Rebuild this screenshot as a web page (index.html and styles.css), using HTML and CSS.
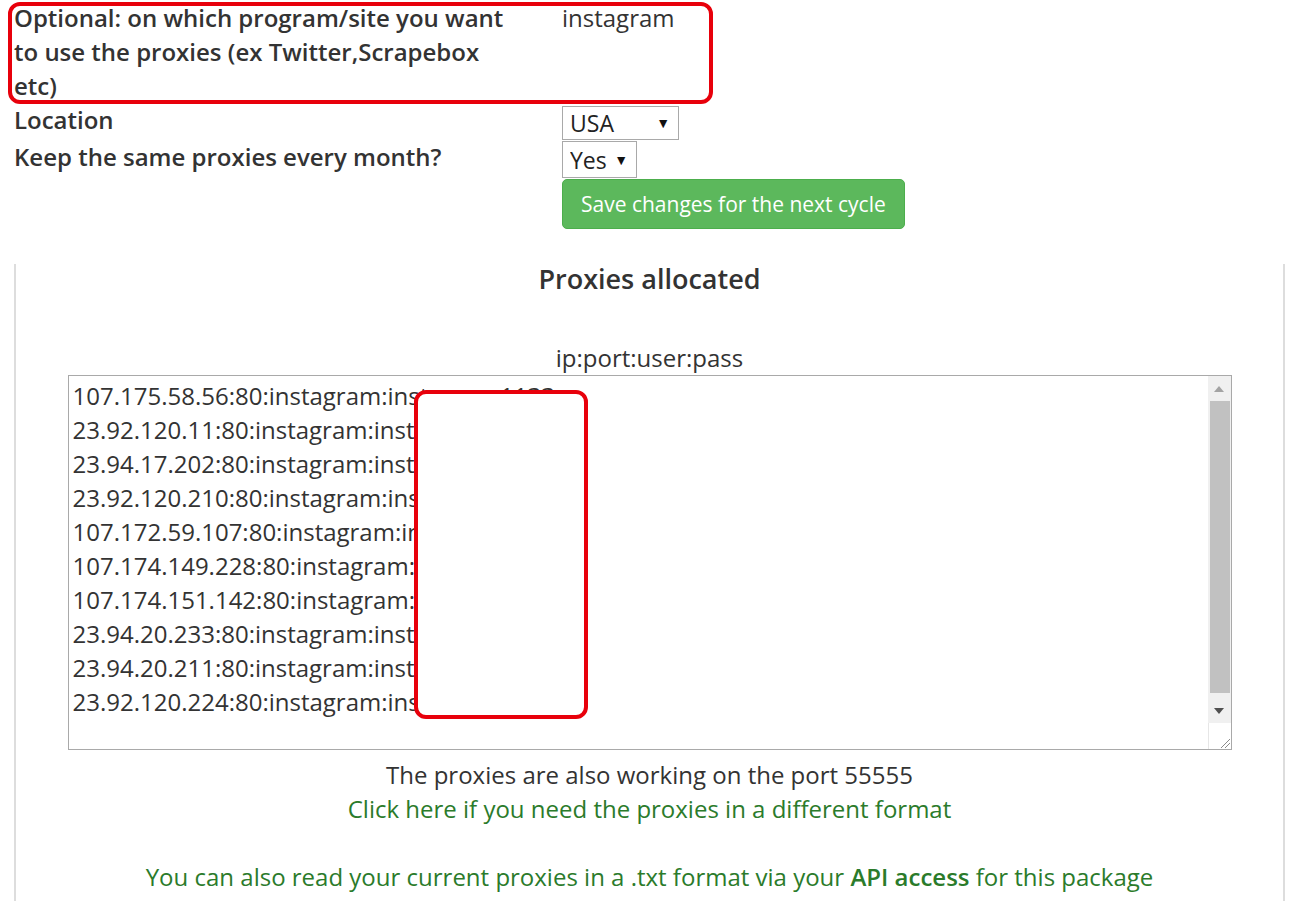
FILE: index.html
```html
<!DOCTYPE html>
<html lang="en">
  <head>
    <meta charset="UTF-8">
    <meta name="viewport" content="width=device-width, initial-scale=1.0">
    <title>Proxy package settings</title>
    <link rel="stylesheet" href="styles.css">
  </head>
  <body>
    <div class="page">
      <div class="settings">
        <div class="label">Optional: on which program/site you want to use the proxies (ex Twitter,Scrapebox etc)</div>
        <div class="value">instagram</div>

        <div class="label">Location</div>
        <div class="value">
          <span class="select select-location">
            <select>
              <option>USA</option>
              <option>UK</option>
              <option>Germany</option>
            </select>
          </span>
        </div>

        <div class="label label-keep">Keep the same proxies every month?</div>
        <div class="value">
          <span class="select select-keep">
            <select>
              <option>Yes</option>
              <option>No</option>
            </select>
          </span>
        </div>

        <div class="label"></div>
        <div class="value">
          <button class="btn-save">Save changes for the next cycle</button>
        </div>
      </div>

      <!-- annotation box drawn over the first row -->
      <div class="mark mark-row"></div>

      <div class="panel">
        <h4>Proxies allocated</h4>
        <div class="format">ip:port:user:pass</div>

        <div class="proxy-box">
          <textarea id="proxyList" readonly>107.175.58.56:80:instagram:instagram1133
23.92.120.11:80:instagram:instagram1133
23.94.17.202:80:instagram:instagram1133
23.92.120.210:80:instagram:instagram1133
107.172.59.107:80:instagram:instagram1133
107.174.149.228:80:instagram:instagram1133
107.174.151.142:80:instagram:instagram1133
23.94.20.233:80:instagram:instagram1133
23.94.20.211:80:instagram:instagram1133
23.92.120.224:80:instagram:instagram1133</textarea>

          <div class="scrollbar">
            <div class="sb-btn">
              <svg width="10" height="6" viewBox="0 0 10 6"><path d="M0 6 L5 0 L10 6 Z" fill="#a3a3a3"/></svg>
            </div>
            <div class="sb-track"><div class="sb-thumb"></div></div>
            <div class="sb-btn">
              <svg width="10" height="6" viewBox="0 0 10 6"><path d="M0 0 L10 0 L5 6 Z" fill="#505050"/></svg>
            </div>
            <div class="sb-corner">
              <svg width="12" height="12" viewBox="0 0 12 12">
                <path d="M2 11 L11 2 M6 11 L11 6" stroke="#8a8a8a" stroke-width="1"/>
              </svg>
            </div>
          </div>

          <!-- annotation box hiding the passwords -->
          <div class="mark mark-pass"></div>
        </div>

        <p class="port-note">The proxies are also working on the port 55555</p>
        <a class="link" href="#">Click here if you need the proxies in a different format</a>
        <p class="api-note">You can also read your current proxies in a .txt format via your <a href="#">API access</a> for this package</p>
      </div>
    </div>
  </body>
</html>
```

FILE: styles.css
```css
body {
    margin: 0;
    font-family: "Open Sans", "Liberation Sans", Arial, sans-serif;
    font-size: 24px;
    line-height: 34px;
    color: #333;
    background: #fff;
}
.page {
    position: relative;
    width: 1271px;
    margin-left: 14px;
    padding-top: 1px;
}
.settings {
    display: grid;
    grid-template-columns: 548px auto;
    align-items: start;
}
.label {
    font-weight: 600;
    padding-right: 40px;
}
.select {
    position: relative;
    display: inline-block;
}
.select select {
    -webkit-appearance: none;
    appearance: none;
    display: block;
    font-family: inherit;
    font-size: 23px;
    color: #222;
    background: #fff;
    border: 1px solid #a9a9a9;
    border-radius: 0;
    padding: 0 0 0 7px;
    margin: 0;
}
.select::after {
    content: "\25BC";
    position: absolute;
    top: 50%;
    transform: translateY(-50%);
    font-size: 14px;
    line-height: 14px;
    color: #111;
    pointer-events: none;
}
.select-location {
    margin-top: 3px;
}
.select-location select {
    width: 117px;
    height: 34px;
}
.select-location::after {
    right: 9px;
}
.select-keep {
    margin-top: 1px;
}
.select-keep select {
    width: 75px;
    height: 37px;
}
.select-keep::after {
    right: 9px;
}
.btn-save {
    margin-top: 1px;
    height: 50px;
    padding: 0 18px;
    font-family: inherit;
    font-size: 21px;
    color: #fff;
    background-color: #5cb85c;
    border: 1px solid #4cae4c;
    border-radius: 5px;
    cursor: pointer;
}
.mark {
    position: absolute;
    border: 4px solid #e8000b;
    border-radius: 12px;
    box-sizing: border-box;
}
.mark-row {
    left: -6px;
    top: 2px;
    width: 705px;
    height: 102px;
}
.panel {
    margin-top: 35px;
    border-left: 2px solid #ddd;
    border-right: 2px solid #ddd;
    text-align: center;
    padding-bottom: 20px;
}
.panel h4 {
    margin: 0;
    font-size: 27px;
    font-weight: 600;
    line-height: 30px;
}
.format {
    margin-top: 47px;
}
.proxy-box {
    position: relative;
    width: 1164px;
    height: 375px;
    margin: 0 auto;
}
.proxy-box textarea {
    display: block;
    box-sizing: border-box;
    width: 100%;
    height: 100%;
    margin: 0;
    padding: 3px 30px 3px 4px;
    font-family: inherit;
    font-size: 24px;
    line-height: 34px;
    color: #333;
    border: 1px solid #a9a9a9;
    resize: none;
    overflow: hidden;
    white-space: pre;
}
.scrollbar {
    position: absolute;
    top: 1px;
    right: 1px;
    bottom: 1px;
    width: 23px;
    display: flex;
    flex-direction: column;
    background: #f0f0f0;
}
.sb-btn {
    height: 25px;
    display: flex;
    align-items: center;
    justify-content: center;
}
.sb-track {
    flex: 1;
    display: flex;
    flex-direction: column;
    padding: 0 1px 5px 2px;
}
.sb-thumb {
    flex: 1;
    background: #c1c1c1;
}
.sb-corner {
    height: 26px;
    background: #fff;
    border-left: 1px solid #e6e6e6;
    display: flex;
    align-items: flex-end;
    justify-content: flex-end;
}
.mark-pass {
    left: 346px;
    top: 15px;
    width: 174px;
    height: 329px;
    background: #fff;
}
.port-note {
    margin: 8px 0 0;
}
.link,
.api-note {
    color: #2b7b2b;
    text-decoration: none;
}
.api-note {
    margin: 34px 0 0;
}
.api-note a {
    color: #2b7b2b;
    font-weight: 600;
    text-decoration: none;
}
```
